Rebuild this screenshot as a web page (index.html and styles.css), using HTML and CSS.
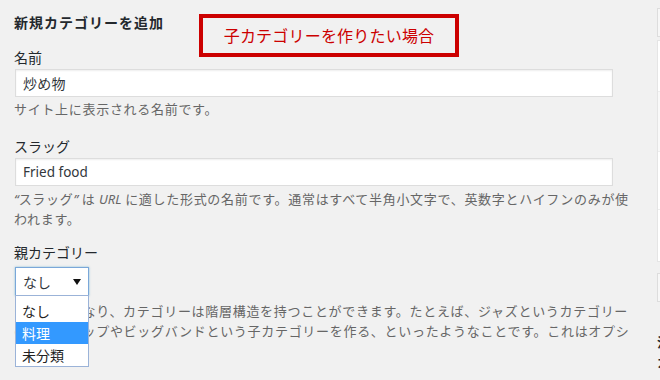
FILE: index.html
```html
<!DOCTYPE html>
<html lang="ja">
<head>
    <meta charset="UTF-8">
    <title>カテゴリー</title>
    <link rel="stylesheet" href="styles.css">
</head>
<body>
    <div class="page">
        <div class="col-left">
            <h2 class="form-title">新規カテゴリーを追加</h2>
            <div class="note">子カテゴリーを作りたい場合</div>

            <div class="form-field field-name">
                <label>名前</label>
                <div class="text-input">炒め物</div>
                <p class="description">サイト上に表示される名前です。</p>
            </div>

            <div class="form-field field-slug">
                <label>スラッグ</label>
                <div class="text-input latin">Fried food</div>
                <p class="description"><em>“</em>スラッグ<em>”</em> は <em>URL</em> に適した形式の名前です。通常はすべて半角小文字で、英数字とハイフンのみが使われます。</p>
            </div>

            <div class="form-field field-parent">
                <label>親カテゴリー</label>
                <div class="select-wrap">
                    <div class="select">
                        <span>なし</span>
                        <svg class="arrow" width="8" height="6" viewBox="0 0 8 6"><path d="M0 0h8L4 6z" fill="#111"/></svg>
                    </div>
                    <ul class="select-menu">
                        <li>なし</li>
                        <li class="active">料理</li>
                        <li>未分類</li>
                    </ul>
                </div>
                <p class="description">タグとは異なり、カテゴリーは階層構造を持つことができます。たとえば、ジャズというカテゴリーの下にビバップやビッグバンドという子カテゴリーを作る、といったようなことです。これはオプションです。</p>
            </div>
        </div>

        <div class="col-right">
            <div class="bulk-box"></div>
            <div class="list-table">
                <div class="row row-1"></div>
                <div class="row row-2"></div>
                <div class="row row-3"></div>
                <div class="row row-4"></div>
            </div>
            <div class="bulk-box bottom"></div>
            <p class="side-note">注意:<br>カテゴリー</p>
        </div>
    </div>
</body>
</html>
```

FILE: styles.css
```css
body {
    margin: 0;
    background: #f1f1f1;
    font-family: "Noto Sans", "Noto Sans CJK JP", sans-serif;
    color: #23282d;
    overflow: hidden;
}

.page {
    display: flex;
    width: 960px;
    height: 380px;
}

.col-left {
    position: relative;
    width: 628px;
    flex-shrink: 0;
    padding: 0 15px 0 14px;
}

.form-title {
    margin: 0;
    padding-top: 12px;
    font-size: 14px;
    line-height: 20px;
    font-weight: 700;
    letter-spacing: 1px;
    font-family: "Noto Sans CJK JP", sans-serif;
}

/* annotation box drawn over the screenshot */
.note {
    position: absolute;
    left: 199px;
    top: 14px;
    width: 252px;
    height: 35px;
    border: 4px solid #cc0000;
    color: #cc0000;
    font-family: "Noto Sans CJK JP", sans-serif;
    font-size: 16px;
    letter-spacing: 0.2px;
    line-height: 35px;
    text-align: center;
}

.form-field label {
    display: block;
    font-family: "Noto Sans CJK JP", sans-serif;
    font-size: 14px;
    line-height: 20px;
    color: #23282d;
}

.field-name {
    margin-top: 15px;
}

.field-slug {
    margin-top: 17px;
}

.field-parent {
    margin-top: 13px;
}

.text-input {
    box-sizing: border-box;
    width: 598px;
    height: 28px;
    margin-top: 2px;
    margin-left: 1px;
    padding: 0 7px;
    background: #fff;
    border: 1px solid #ddd;
    box-shadow: inset 0 1px 2px rgba(0, 0, 0, 0.07);
    font-family: "Noto Sans CJK JP", sans-serif;
    font-size: 14px;
    letter-spacing: 0.3px;
    line-height: 26px;
    color: #32373c;
}

.text-input.latin {
    font-family: "Noto Sans", sans-serif;
    font-size: 13.5px;
    letter-spacing: 0;
}

.description {
    margin: 2px 0 0;
    font-family: "Noto Sans CJK JP", sans-serif;
    font-size: 13px;
    line-height: 20px;
    letter-spacing: 0.7px;
    color: #666;
}

.field-slug .description {
    margin-top: 3px;
}

.description em {
    font-family: "Noto Sans", sans-serif;
    font-style: italic;
    letter-spacing: 0;
}

.select-wrap {
    position: relative;
    margin-top: 5px;
    margin-left: 1px;
    width: 74px;
}

.select {
    box-sizing: border-box;
    height: 29px;
    display: flex;
    align-items: center;
    justify-content: space-between;
    padding: 0 7px 0 7px;
    background: #fff;
    border: 1px solid #7aa7d9;
    box-shadow: 0 0 2px rgba(30, 140, 190, 0.5);
    font-family: "Noto Sans CJK JP", sans-serif;
    font-size: 14px;
    color: #32373c;
}

.select-menu {
    position: absolute;
    left: 0;
    top: 28px;
    box-sizing: border-box;
    width: 74px;
    margin: 0;
    padding: 4px 0 0;
    list-style: none;
    background: #fff;
    border: 1px solid #9bb3d8;
    z-index: 2;
}

.select-menu li {
    height: 22px;
    padding-left: 6px;
    font-family: "Noto Sans CJK JP", sans-serif;
    font-size: 14px;
    line-height: 22px;
    color: #222;
}

.select-menu li.active {
    background: #3399ff;
    color: #fff;
}

.field-parent .description {
    margin-top: 5px;
    margin-right: 8px;
}

.col-right {
    flex: 1;
    padding-top: 8px;
}

.bulk-box {
    height: 27px;
    border: 1px solid #ddd;
    background: #f7f7f7;
}

.bulk-box.bottom {
    margin-top: 11px;
}

.list-table {
    margin-top: 3px;
    background: #fff;
    border: 1px solid #e5e5e5;
}

.row {
    border-top: 1px solid #eee;
}

.row:first-child {
    border-top: none;
}

.row-1 { height: 50px; }
.row-2 { height: 59px; background: #f9f9f9; }
.row-3 { height: 57px; }
.row-4 { height: 51px; }

.side-note {
    margin: 30px 0 0;
    font-family: "Noto Sans CJK JP", sans-serif;
    font-size: 13px;
    line-height: 20px;
    font-weight: 700;
}
```
